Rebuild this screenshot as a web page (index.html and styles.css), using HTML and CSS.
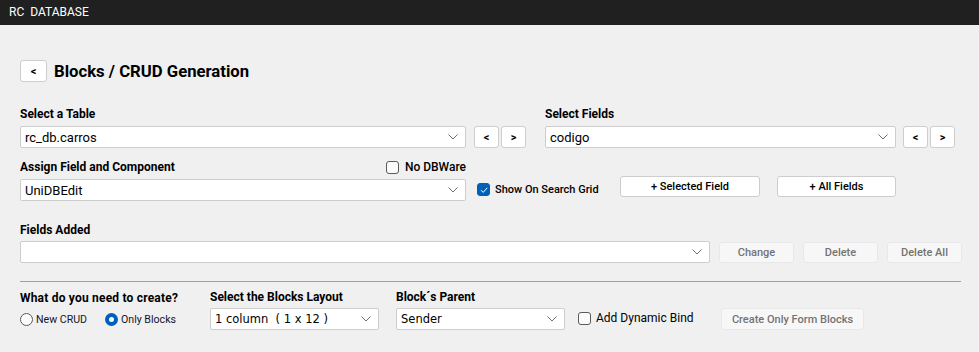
FILE: index.html
```html
<!DOCTYPE html>
<html>
<head>
  <meta charset="UTF-8">
  <title>RC DATABASE</title>
  <link rel="stylesheet" href="styles.css">
</head>
<body>
  <div class="topbar">RC&nbsp; DATABASE</div>

  <div class="container">
    <div class="header">
      <button class="nav-button back">&lt;</button>
      <h1 class="title">Blocks / CRUD Generation</h1>
    </div>

    <div class="row row-tables">
      <div class="field wide">
        <div class="label">Select a Table</div>
        <div class="select">
          <span class="value">rc_db.carros</span>
          <svg class="chevron" viewBox="0 0 10 6"><polyline points="0.5 0.5 5 5 9.5 0.5"/></svg>
        </div>
      </div>
      <div class="nav-pair">
        <button class="nav-button">&lt;</button>
        <button class="nav-button">&gt;</button>
      </div>
      <div class="field fields-col">
        <div class="label">Select Fields</div>
        <div class="select">
          <span class="value">codigo</span>
          <svg class="chevron" viewBox="0 0 10 6"><polyline points="0.5 0.5 5 5 9.5 0.5"/></svg>
        </div>
      </div>
      <div class="nav-pair">
        <button class="nav-button">&lt;</button>
        <button class="nav-button">&gt;</button>
      </div>
    </div>

    <div class="row row-assign">
      <div class="field wide">
        <div class="label-row">
          <div class="label">Assign Field and Component</div>
          <label class="check">
            <span class="box"></span>
            No DBWare
          </label>
        </div>
        <div class="select">
          <span class="value">UniDBEdit</span>
          <svg class="chevron" viewBox="0 0 10 6"><polyline points="0.5 0.5 5 5 9.5 0.5"/></svg>
        </div>
      </div>
      <label class="check search-grid">
        <span class="box checked">
          <svg viewBox="0 0 10 10"><polyline points="2 5.2 4.2 7.4 8.2 2.8"/></svg>
        </span>
        Show On Search Grid
      </label>
      <button class="button add-selected">+ Selected Field</button>
      <button class="button add-all">+ All Fields</button>
    </div>

    <div class="row row-added">
      <div class="field added">
        <div class="label">Fields Added</div>
        <div class="select">
          <span class="value"></span>
          <svg class="chevron" viewBox="0 0 10 6"><polyline points="0.5 0.5 5 5 9.5 0.5"/></svg>
        </div>
      </div>
      <div class="added-actions">
        <button class="button disabled">Change</button>
        <button class="button disabled">Delete</button>
        <button class="button disabled">Delete All</button>
      </div>
    </div>

    <div class="divider"></div>

    <div class="row row-create">
      <div class="field create-col">
        <div class="label">What do you need to create?</div>
        <div class="radios">
          <label class="radio"><span class="circle"></span>New CRUD</label>
          <label class="radio"><span class="circle checked"></span>Only Blocks</label>
        </div>
      </div>
      <div class="field small">
        <div class="label">Select the Blocks Layout</div>
        <div class="select alt">
          <span class="value">1 column&nbsp; ( 1 x 12 )</span>
          <svg class="chevron" viewBox="0 0 10 6"><polyline points="0.5 0.5 5 5 9.5 0.5"/></svg>
        </div>
      </div>
      <div class="field small">
        <div class="label">Block´s Parent</div>
        <div class="select alt">
          <span class="value">Sender</span>
          <svg class="chevron" viewBox="0 0 10 6"><polyline points="0.5 0.5 5 5 9.5 0.5"/></svg>
        </div>
      </div>
      <label class="check dynamic">
        <span class="box"></span>
        Add Dynamic Bind
      </label>
      <button class="button disabled create">Create Only Form Blocks</button>
    </div>
  </div>
</body>
</html>
```

FILE: styles.css
```css
:root {
  --page-bg: #F0F0F0;
  --bar-bg: #202020;
  --border: #CDCDCD;
  --text-primary: #000000;
  --text-disabled: #737373;
  --accent: #005FB8;
}

body {
  margin: 0;
  background: var(--page-bg);
  font-family: Roboto, "Noto Sans", sans-serif;
  color: var(--text-primary);
}

.topbar {
  height: 25px;
  line-height: 25px;
  padding-left: 9px;
  background: var(--bar-bg);
  color: white;
  font-size: 12px;
}

.container {
  padding: 35px 0 0 20px;
}

.header {
  display: flex;
  align-items: center;
  gap: 7px;
  margin-bottom: 24px;
}

.title {
  margin: 0;
  font-size: 16.7px;
  font-weight: 700;
}

button {
  font-family: inherit;
  margin: 0;
  cursor: pointer;
}

.nav-button {
  width: 25px;
  height: 22px;
  padding: 0;
  background: white;
  border: 1px solid var(--border);
  border-radius: 3px;
  font-size: 11px;
  font-weight: 700;
  color: var(--text-primary);
}

.nav-button.back {
  width: 27px;
}

.row {
  display: flex;
  align-items: flex-end;
}

.field {
  display: flex;
  flex-direction: column;
}

.label {
  font-size: 12px;
  font-weight: 700;
  line-height: 16px;
  margin-bottom: 4px;
}

.label-row {
  display: flex;
  justify-content: space-between;
  align-items: center;
  margin-bottom: 4px;
}

.label-row .label {
  margin-bottom: 0;
}

.select {
  display: flex;
  align-items: center;
  height: 22px;
  box-sizing: border-box;
  padding: 0 7px 0 4px;
  background: white;
  border: 1px solid var(--border);
  border-radius: 2px;
  font-size: 13px;
}

.select .value {
  flex: 1;
  white-space: nowrap;
}

.select.alt {
  font-family: "DejaVu Sans", sans-serif;
  font-size: 11.5px;
}

.chevron {
  width: 10px;
  height: 6px;
  fill: none;
  stroke: #707070;
  stroke-width: 1;
}

.wide {
  width: 446px;
}

.nav-pair {
  display: flex;
  gap: 2px;
  margin-left: 8px;
}

.fields-col {
  width: 351px;
  margin-left: 19px;
}

.fields-col + .nav-pair {
  margin-left: 7px;
}

.row-tables {
  margin-bottom: 11px;
}

.check {
  display: flex;
  align-items: center;
  gap: 6px;
  font-size: 12px;
}

.box {
  width: 13px;
  height: 13px;
  box-sizing: border-box;
  border: 1px solid #5A5A5A;
  border-radius: 3px;
  background: #FBFBFB;
  display: flex;
  align-items: center;
  justify-content: center;
}

.box.checked {
  background: var(--accent);
  border-color: var(--accent);
}

.box svg {
  width: 10px;
  height: 10px;
  fill: none;
  stroke: white;
  stroke-width: 1;
}

.search-grid {
  width: 122px;
  gap: 5px;
  margin: 0 0 5px 11px;
  font-size: 11px;
  font-weight: 500;
}

.label-row .check {
  font-weight: 500;
}

.button {
  height: 21px;
  padding: 0;
  background: white;
  border: 1px solid var(--border);
  border-radius: 3px;
  font-size: 11px;
  font-weight: 500;
  color: var(--text-primary);
}

.add-selected {
  width: 140px;
  margin: 0 0 4px 21px;
}

.add-all {
  width: 119px;
  margin: 0 0 4px 17px;
}

.row-assign {
  margin-bottom: 21px;
}

.added {
  width: 690px;
}

.added .label {
  margin-bottom: 3px;
}

.added-actions {
  display: flex;
  gap: 9px;
  margin-left: 9px;
}

.button.disabled {
  width: 75px;
  background: #F7F7F7;
  border-color: #E8E8E8;
  color: var(--text-disabled);
  cursor: default;
}

.divider {
  width: 941px;
  height: 1px;
  margin: 18px 0 7px;
  background: #A0A0A0;
}

.create-col {
  width: 190px;
}

.create-col .label {
  margin-bottom: 2px;
  letter-spacing: 0.2px;
}

.radios {
  display: flex;
  gap: 18px;
  height: 22px;
  align-items: center;
}

.radio {
  display: flex;
  align-items: center;
  gap: 3px;
  font-size: 10.6px;
  color: #141428;
}

.circle {
  width: 13px;
  height: 13px;
  box-sizing: border-box;
  border: 1px solid #5A5A5A;
  border-radius: 50%;
  background: #FBFBFB;
}

.circle.checked {
  border: 4.5px solid var(--accent);
  background: white;
}

.small {
  width: 169px;
  margin-right: 17px;
}

.small .label {
  margin-bottom: 3px;
}

.dynamic {
  width: 125px;
  gap: 5px;
  margin: 0 0 5px -4px;
}

.button.create {
  width: 143px;
  height: 22px;
  margin-left: 18px;
}
```
